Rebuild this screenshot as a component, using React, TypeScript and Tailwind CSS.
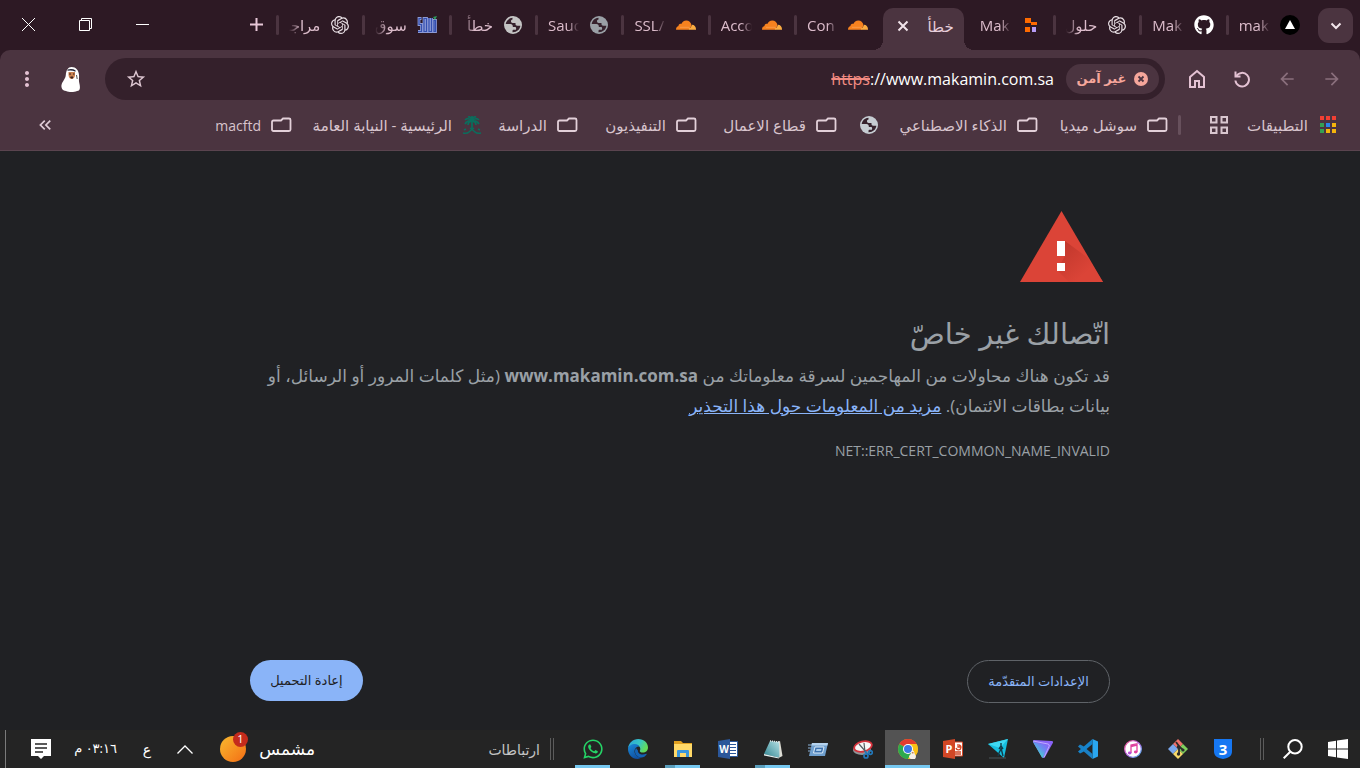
import type { ReactNode } from "react";
import { SiOpenai } from "react-icons/si";
import { FaGithub, FaWhatsapp } from "react-icons/fa";
import {
  MdArrowBack,
  MdArrowForward,
  MdKeyboardDoubleArrowLeft,
  MdMoreVert,
  MdOutlineStarBorder,
} from "react-icons/md";

/* ---------- site and toolbar icons ---------- */

function Globe({ color }: { color: string }) {
  return (
    <svg viewBox="0 0 20 20" className="size-5 shrink-0" aria-hidden="true">
      <circle cx="10" cy="10" r="9" fill={color} />
      <path
        d="M9.500 2.800C6 3 3.300 5.500 2.700 9h4.800c1.500 0 2.300 1 2.300 2.300v.7h2.400c.5 0 .9.400.9.900v1c0 .6-.3.900-.9.900h-1.500c-.8 0-1.200.5-1.200 1.200v1.200c4.200.2 7.400-2.600 7.900-6.400h-3.200c-1 0-1.700-.7-1.700-1.700V7.900H9.700c-1 0-1.700-.7-1.700-1.700 0-.9.600-1.500 1.500-1.600z"
        fill="#36222d"
      />
    </svg>
  );
}

function Cloudflare() {
  return (
    <svg viewBox="0 0 20 20" className="size-5" aria-hidden="true">
      <path d="M0 14.800C0 12.700 1 11.200 2.500 11c0-1.700 1.400-2.800 2.800-2C6 6.900 8 5.400 10.300 5.400c2.600 0 4.700 1.900 5.200 4.500l-1.800 4.900z" fill="#f6821f" />
      <path d="M16 9.800l-1.400 3-2 .8.900 1.200h6.500c.2-2.800-1.400-4.900-4-5z" fill="#fbad41" />
      <path d="M4 12.300h9.500" stroke="#f9a45a" strokeWidth="0.700" />
    </svg>
  );
}

function SouqLogo() {
  return (
    <svg viewBox="0 0 20 20" className="size-5" aria-hidden="true">
      <g fill="none" stroke="#8d9bd6" strokeWidth="2.800">
        <path d="M4.500 3.500H2v6h2.500v7H1M7 3.500v13h2.500v-13zM12 3v13.500h2.500V3M17 5.500v11h1.500v-11z" />
      </g>
      <g fill="none" stroke="#3450b0" strokeWidth="1.200">
        <path d="M4.500 3.500H2v6h2.500v7H1M7 3.500v13h2.500v-13zM12 3v13.500h2.500V3M17 5.500v11h1.500v-11z" />
      </g>
      <path d="M16 2l2 3 2-4z" fill="#2c9a5c" />
    </svg>
  );
}

function PixelBlocks() {
  return (
    <svg viewBox="0 0 20 20" className="size-5" aria-hidden="true">
      <path d="M4 3h6v5H4zM10 7h6v3h-6zM4 12h5v5H4z" fill="#ff6a00" />
      <path d="M11 12h4v5h-4z" fill="#b69cf5" />
    </svg>
  );
}

function Vercel() {
  return (
    <svg viewBox="0 0 20 20" className="size-5" aria-hidden="true">
      <circle cx="10" cy="10" r="10" fill="#000" />
      <path d="M10 5l5 9H5z" fill="#fff" />
    </svg>
  );
}

function Folder() {
  return (
    <svg viewBox="0 0 21 16" className="h-4 w-[21px] shrink-0" aria-hidden="true">
      <path
        d="M2.500 3.500h7.500l2-2h6q1.500 0 1.500 1.500v9.500q0 1.500-1.500 1.500h-15.500q-1.500 0-1.500-1.500v-7.500q0-1.500 1.500-1.500z"
        fill="none"
        stroke="#e3d0d9"
        strokeWidth="1.800"
      />
    </svg>
  );
}

function PalmEmblem() {
  return (
    <svg viewBox="0 0 20 20" className="size-5 shrink-0" fill="none" stroke="#0b6e5d" aria-hidden="true">
      <path d="M10 14V5" strokeWidth="1.800" />
      <path
        d="M10 6Q9 1 6 2M10 6q1-5 4-4M10 6Q6 2 3 5M10 6q4-4 7-1M10 6Q5 5 3 9M10 6q5-1 7 3M10 6Q6 7 6 10M10 6q4 1 4 4M10 6V1"
        strokeWidth="1.700"
      />
      <path d="M1 18q4 1 6-1t5-4M19 18q-4 1-6-1t-5-4M2 15l2-1M18 15l-2-1" strokeWidth="1.500" />
    </svg>
  );
}

function AppsGrid() {
  const cells = [
    "#f23f33", "#f23f33", "#f23f33",
    "#35a053", "#2b84ea", "#f5b50c",
    "#35a053", "#f5b50c", "#f5b50c",
  ];
  return (
    <svg viewBox="0 0 18 18" className="size-[18px] shrink-0" aria-hidden="true">
      {cells.map((c, i) => (
        <rect key={i} x={1 + (i % 3) * 6} y={(i < 3 ? 0 : 1) + Math.floor(i / 3) * 6} width="4" height="4" fill={c} />
      ))}
    </svg>
  );
}

function TabGroups() {
  return (
    <svg viewBox="0 0 18 18" className="size-[18px]" fill="none" stroke="#d9c6cf" strokeWidth="2" aria-hidden="true">
      <path d="M1 1h5.500v5.500H1zM11.500 1H17v5.500h-5.500zM1 11.500h5.500V17H1zM11.500 11.500H17V17h-5.500z" />
    </svg>
  );
}

function Home() {
  return (
    <svg viewBox="0 0 18 20" className="h-5 w-[18px]" fill="none" stroke="#e4c2d3" strokeWidth="2" aria-hidden="true">
      <path d="M2 8l7-6 7 6v10h-5v-6H7v6H2z" />
    </svg>
  );
}

function Reload() {
  return (
    <svg viewBox="0 0 18 18" className="size-[18px]" fill="none" stroke="#e4c2d3" strokeWidth="2" aria-hidden="true">
      <path d="M2.500 1.500v5h5" />
      <path d="M3.300 6.200A6.800 6.800 0 1 1 2.400 10.500" />
    </svg>
  );
}

function Avatar() {
  return (
    <svg viewBox="0 0 20 26" className="h-[26px] w-5" aria-hidden="true">
      <path d="M10.500 1c4.500 0 7 3 7.500 8 .3 3-.5 4.500.3 8 1 4 1.200 8-2.300 8-3 1.300-8 1.300-11 0-3.500 0-5-3-4.500-6C1.500 15 4.500 13 4.800 9c.4-5 2.200-8 5.700-8z" fill="#fff" />
      <path d="M7.500 6h6.500v4q-1 3-3.500 3T7.500 9z" fill="#c98150" />
      <path d="M6.500 3.500q4.500-1.500 8 .7v1.500q-4-2-8-.9z" fill="#252637" />
      <path d="M8 8h2M12 8h1.500M9.500 11h2.500l-1 1.500z" stroke="#3a211c" fill="#3a211c" />
      <path d="M15.500 9l.7 4" stroke="#555" />
    </svg>
  );
}

/* ---------- taskbar icons ---------- */

function Svg({ children }: { children: ReactNode }) {
  return (
    <svg viewBox="0 0 20 20" className="size-5" aria-hidden="true">
      {children}
    </svg>
  );
}

const EdgeIcon = () => (
  <Svg>
    <defs>
      <linearGradient id="edgeTop" x1="0" y1="0" x2="1" y2="0.400">
        <stop offset="0" stopColor="#2a9fdc" />
        <stop offset="0.600" stopColor="#37c6c4" />
        <stop offset="1" stopColor="#63dc5a" />
      </linearGradient>
      <linearGradient id="edgeBody" x1="0" y1="0" x2="0.600" y2="1">
        <stop offset="0" stopColor="#1b8ad8" />
        <stop offset="1" stopColor="#0f4fa0" />
      </linearGradient>
    </defs>
    <path d="M0 9.500C.5 4 5 0 10.200 0 16 0 20 4 20 8.500c0 3-2.300 5-5 5-2.200 0-3.600-1-3.200-1.800 1.200-1.500.5-5.700-4.300-5.700C3.500 6 .5 8 0 9.500z" fill="url(#edgeTop)" />
    <path d="M0 10c0-3 3.500-5 7-5 2 0 3.700 1 4.500 2.500C8.500 7.500 6.500 9.500 6.500 12c0 4 3.500 6.500 7 6.500-1.200.900-2.500 1.400-4 1.400C4 19.900 0 15.500 0 10z" fill="url(#edgeBody)" />
    <path d="M8 9c-3 5 1 9.500 5.500 9.500 2 0 4-1.300 5.200-3.300.2-.4-.1-.6-.5-.4-4.200 2-8.500 0-8.300-3.300z" fill="#1463b5" />
  </Svg>
);

const ExplorerIcon = () => (
  <Svg>
    <path d="M1 2h7l2 2h9v4H1z" fill="#e0a020" />
    <path d="M1 5h18v13H1z" fill="#ffd968" />
    <path d="M4 18v-6q0-1 1-1h10q1 0 1 1v6h-3v-4H7v4z" fill="#3a96dd" />
  </Svg>
);

const WordIcon = () => (
  <Svg>
    <path d="M11 2.500h8.500v15H11z" fill="#fff" stroke="#2b579a" />
    <path d="M12 5.500h6M12 8.500h6M12 11.500h6M12 14.500h6" stroke="#2b579a" />
    <path d="M0 2l12-2v20L0 18z" fill="#2b579a" />
    <text x="6" y="14" textAnchor="middle" fontSize="10" fontWeight="700" fill="#fff">W</text>
  </Svg>
);

const PowerPointIcon = () => (
  <Svg>
    <path d="M11 3h8.500v14H11z" fill="#fff" stroke="#d24726" />
    <path d="M15 5v3h3M13 9a2.500 2.500 0 1 0 3 -3M12 13h6M12 15h6" stroke="#d24726" strokeWidth="1.300" fill="none" />
    <path d="M0 2l12-2v20L0 18z" fill="#d24726" />
    <text x="6" y="14" textAnchor="middle" fontSize="11" fontWeight="700" fill="#fff">P</text>
  </Svg>
);

const NotepadIcon = () => (
  <Svg>
    <defs>
      <linearGradient id="padCover" x1="0" y1="1" x2="1" y2="0">
        <stop offset="0" stopColor="#2f8390" />
        <stop offset="1" stopColor="#b5e0e4" />
      </linearGradient>
    </defs>
    <path d="M14 3l3-1 2.500 15-4 2z" fill="#dcdcd4" />
    <path d="M7 2l9 1 .5 14.500-1.500 1L1 15z" fill="url(#padCover)" />
    <path d="M1 15l14.500 3.500.5 1L1 16.500z" fill="#e6f3f4" />
    <path d="M7 2l9 1" stroke="#e3e8e8" strokeDasharray="1 1" strokeWidth="1.500" />
  </Svg>
);

const RunIcon = () => (
  <Svg>
    <path d="M4 4h16l-3 13H1z" fill="#6f9fce" />
    <path d="M4 4h16l-.7 2.500h-16z" fill="#b5d3ee" />
    <path d="M7 8h9l-1.500 6H5.500z" fill="#3b71ae" stroke="#dcebf8" />
    <path d="M8.500 10h5l-.5 2H8z" fill="#a9cbea" />
    <path d="M0 6h4M0 9h3M0 12h2" stroke="#8db4da" />
  </Svg>
);

const SnippingIcon = () => (
  <Svg>
    <ellipse cx="9" cy="11" rx="9" ry="5" fill="#8f9699" />
    <ellipse cx="10" cy="7.500" rx="9" ry="5" transform="rotate(-14 10 7.500)" fill="#f6f6f6" stroke="#d5323c" strokeWidth="1.800" />
    <path d="M6 5l7 8M11 4l1 9" stroke="#555c60" strokeWidth="1.200" />
    <g fill="none" stroke="#2278ba" strokeWidth="1.700">
      <circle cx="13" cy="17" r="2" />
      <circle cx="17.500" cy="13.500" r="1.800" />
      <path d="M12 12l2 3 2-1" />
    </g>
  </Svg>
);

const ChromeIcon = () => (
  <Svg>
    <circle cx="10" cy="10" r="10" fill="#fbc116" />
    <path d="M10 10L1.340 5A10 10 0 0 1 18.660 5z" fill="#e33b2e" />
    <path d="M1.340 5A10 10 0 0 0 10 20l4.330-7.500L10 10z" fill="#2da94f" />
    <path d="M10 5h8.660A10 10 0 0 1 10 20l4.330-7.500z" fill="#fbc116" />
    <circle cx="10" cy="10" r="5" fill="#fff" />
    <circle cx="10" cy="10" r="4" fill="#3b78e7" />
    <path d="M14 11.500q1.500-.5 2 1l.7 2.500q1.300 1 1.300 3l-1 2h-4q-2-.5-2-2.500 0-1 1.500-2 .5-3 1.500-4z" fill="#f6efe8" />
    <path d="M13.800 13h1.700v1.500h-1.700z" fill="#c98150" />
  </Svg>
);

const RunnerIcon = () => (
  <Svg>
    <path d="M0 5L20 0l-4 19z" fill="#16bfe0" />
    <path d="M0 5L20 0l-8 9z" fill="#3fd8f2" />
    <path d="M13 4v3l-2 3M13 7l2 3M13 9l1 4 1 4M13 10l-2 4-1 3" fill="none" stroke="#123c4a" strokeWidth="1.400" />
    <path d="M1 19h17" stroke="#4b5558" />
  </Svg>
);

const ProtonIcon = () => (
  <Svg>
    <defs>
      <linearGradient id="proton" x1="0" y1="1" x2="1" y2="0">
        <stop offset="0.200" stopColor="#3fe0c5" />
        <stop offset="0.600" stopColor="#6a8cf0" />
        <stop offset="1" stopColor="#8b5cf6" />
      </linearGradient>
    </defs>
    <path d="M1 1l18 1q1.500.5.800 2L12 18q-1.500 2-3 0L0 3Q0 1 1 1z" fill="#8a63f7" />
    <path d="M0 3l14 3q1.500.5.800 2L10 18.500q-1 .5-1.500-.7z" fill="url(#proton)" />
    <path d="M0 2l15 3q2 .5 1 2.500l-5 11" fill="none" stroke="#c7c0ff" strokeWidth="0.800" />
  </Svg>
);

const VsCodeIcon = () => (
  <Svg>
    <path d="M14.500 0v20L20 17.500v-15z" fill="#2aa7f0" />
    <path d="M14.500 20L0 7.500l2-2 3 1.500 9.500 8z" fill="#1b80c4" />
    <path d="M14.500 0L0 12.500l2 2L5 13l9.500-8z" fill="#1684cc" />
  </Svg>
);

const ITunesIcon = () => (
  <Svg>
    <defs>
      <linearGradient id="itunesRing" x1="0" y1="0" x2="1" y2="1">
        <stop offset="0" stopColor="#fb5c8c" />
        <stop offset="0.500" stopColor="#b763e8" />
        <stop offset="1" stopColor="#4ac3f5" />
      </linearGradient>
    </defs>
    <circle cx="10" cy="10" r="8.300" fill="#fff" stroke="url(#itunesRing)" strokeWidth="1.300" />
    <path d="M8 14V6l6-1.300V13M8 7.500l6-1.300" fill="none" stroke="#e0409e" strokeWidth="1.300" />
    <ellipse cx="6.700" cy="14" rx="1.800" ry="1.400" fill="#b44fd8" />
    <ellipse cx="12.700" cy="13" rx="1.800" ry="1.400" fill="#e0409e" />
  </Svg>
);

const GitIcon = () => (
  <Svg>
    <path d="M10 0l5 5-5 5-5-5z" fill="#f0716b" />
    <path d="M15 5l5 5-5 5-5-5z" fill="#80cf5c" />
    <path d="M5 5l5 5-5 5-5-5z" fill="#7aa7ee" />
    <path d="M10 10l5 5-5 5-5-5z" fill="#f7d96a" />
    <path d="M8 3l3 4v8M10.500 7l4 3.500" fill="none" stroke="#2c2c2c" strokeWidth="1.800" />
    <circle cx="10.500" cy="8" r="1.800" fill="#2c2c2c" />
    <circle cx="15" cy="11" r="1.600" fill="#2c2c2c" />
    <circle cx="10.500" cy="15" r="1.700" fill="#2c2c2c" />
  </Svg>
);

const CssIcon = () => (
  <Svg>
    <path d="M1 0h18v12c0 5-3 7-9 8-6-1-9-3-9-8z" fill="#1677f2" />
    <text x="10" y="15.500" textAnchor="middle" fontSize="15" fontWeight="700" fill="#fff">3</text>
  </Svg>
);

const WindowsIcon = () => (
  <Svg>
    <path d="M0 3l8-1.200v7.700H0zM9 1.600L20 0v9.500H9zM0 10.500h8v7.700L0 17zM9 10.500h11V20L9 18.400z" fill="#fff" />
  </Svg>
);

const SearchIcon = () => (
  <Svg>
    <circle cx="12" cy="7.800" r="6.700" fill="none" stroke="#fff" strokeWidth="2" />
    <path d="M7.300 12.700L.700 19.300" stroke="#fff" strokeWidth="2" />
  </Svg>
);

/* ---------- data ---------- */

type TabItem = { title: string; icon?: ReactNode; rtl?: boolean; active?: boolean };

const chatIcon = <SiOpenai className="size-[18px] text-[#e8dfe4]" />;

const tabs: TabItem[] = [
  { title: "mak", icon: <Vercel /> },
  { title: "Mak", icon: <FaGithub className="size-5 text-white" /> },
  { title: "حلول", icon: chatIcon, rtl: true },
  { title: "Mak", icon: <PixelBlocks /> },
  { title: "خطأ", rtl: true, active: true },
  { title: "Con", icon: <Cloudflare /> },
  { title: "Acco", icon: <Cloudflare /> },
  { title: "SSL/", icon: <Cloudflare /> },
  { title: "Saud", icon: <Globe color="#9aa0a6" /> },
  { title: "خطأ", icon: <Globe color="#c4c4c4" />, rtl: true },
  { title: "سوق", icon: <SouqLogo />, rtl: true },
  { title: "مراجـ", icon: chatIcon, rtl: true },
];

const bookmarks: { label: string; icon: ReactNode; width: string }[] = [
  { label: "سوشل ميديا", icon: <Folder />, width: "w-[130px]" },
  { label: "الذكاء الاصطناعي", icon: <Folder />, width: "w-[159px]" },
  { label: "", icon: <Globe color="#c6ccd2" />, width: "w-[42px]" },
  { label: "قطاع الاعمال", icon: <Folder />, width: "w-[140px]" },
  { label: "التنفيذيون", icon: <Folder />, width: "w-[119px]" },
  { label: "الدراسة", icon: <Folder />, width: "w-[96px]" },
  { label: "الرئيسية - النيابة العامة", icon: <PalmEmblem />, width: "w-[190px]" },
  { label: "macftd", icon: <Folder />, width: "w-[90px] text-[14px]" },
];

const pinned: { name: string; icon: ReactNode; state?: "open" | "stacked" | "focused" }[] = [
  { name: "CSS", icon: <CssIcon /> },
  { name: "Git", icon: <GitIcon /> },
  { name: "iTunes", icon: <ITunesIcon /> },
  { name: "VS Code", icon: <VsCodeIcon /> },
  { name: "Proton VPN", icon: <ProtonIcon /> },
  { name: "Runner", icon: <RunnerIcon /> },
  { name: "PowerPoint", icon: <PowerPointIcon /> },
  { name: "Chrome", icon: <ChromeIcon />, state: "focused" },
  { name: "Snipping Tool", icon: <SnippingIcon /> },
  { name: "Run", icon: <RunIcon /> },
  { name: "Notepad", icon: <NotepadIcon />, state: "stacked" },
  { name: "Word", icon: <WordIcon /> },
  { name: "Explorer", icon: <ExplorerIcon />, state: "stacked" },
  { name: "Edge", icon: <EdgeIcon /> },
  { name: "WhatsApp", icon: <FaWhatsapp className="size-[22px] text-[#25d366]" />, state: "open" },
];

/* ---------- sections ---------- */

function Tab({ tab, separated }: { tab: TabItem; separated: boolean }) {
  if (tab.active) {
    return (
      <div className="flex min-w-0 flex-1">
        <div className="relative mx-[3px] mt-2 flex min-w-0 flex-1 items-center justify-between rounded-t-[10px] bg-[#4b3440] px-2.5 before:absolute before:bottom-0 before:-left-2.5 before:size-2.5 before:bg-[radial-gradient(circle_at_0_0,transparent_10px,#4b3440_10px)] after:absolute after:-right-2.5 after:bottom-0 after:size-2.5 after:bg-[radial-gradient(circle_at_100%_0,transparent_10px,#4b3440_10px)]">
          <button role="tab" aria-selected="true" className="mb-1.5 text-[15px] text-[#e8cfdb]">
            {tab.title}
          </button>
          <button aria-label="إغلاق علامة التبويب" className="mb-1.5 p-1">
            <svg viewBox="0 0 12 12" className="size-3" stroke="#f0e3ea" strokeWidth="2" aria-hidden="true">
              <path d="M1.500 1.500l9 9M10.500 1.500l-9 9" />
            </svg>
          </button>
        </div>
      </div>
    );
  }
  return (
    <button role="tab" aria-selected="false" className="flex min-w-0 flex-1 items-center">
      <span className="mr-3 flex w-5 shrink-0 justify-center">{tab.icon}</span>
      {tab.rtl ? (
        <span className="mr-2.5 min-w-0 flex-1 overflow-hidden text-right text-[15px] whitespace-nowrap text-[#dcbccb] [mask-image:linear-gradient(to_left,#000_60%,transparent)]">
          {tab.title}
        </span>
      ) : (
        <span
          dir="ltr"
          className="mr-2.5 min-w-0 flex-1 overflow-hidden text-left text-[15px] whitespace-nowrap text-[#dcbccb] [mask-image:linear-gradient(to_right,#000_65%,transparent)]"
        >
          {tab.title}
        </span>
      )}
      <span className={separated ? "mr-2.5 h-5 w-[3px] rounded-full bg-[#4b3440]" : "mr-2.5 w-[3px]"} />
    </button>
  );
}

function TitleBar() {
  return (
    <div className="flex h-[50px]">
      <div className="flex w-12 shrink-0 items-start pt-2 pr-[7px]">
        <button aria-label="البحث في علامات التبويب" className="flex size-[35px] items-center justify-center rounded-[11px] bg-[#4b3440]">
          <svg viewBox="0 0 12 8" className="h-2 w-3" fill="none" stroke="#f3e6ec" strokeWidth="2" aria-hidden="true">
            <path d="M1.500 1.500L6 6l4.500-4.500" />
          </svg>
        </button>
      </div>
      <div role="tablist" className="flex min-w-0 flex-1">
        {tabs.map((tab, i) => (
          <Tab key={i} tab={tab} separated={!tab.active && !tabs[i + 1]?.active} />
        ))}
      </div>
      <div className="flex w-[276px] shrink-0 items-center pb-0.5 text-white">
        <button aria-label="علامة تبويب جديدة" className="mr-[13px]">
          <svg viewBox="0 0 13 13" className="size-[13px]" stroke="#e8c8d8" strokeWidth="2" aria-hidden="true">
            <path d="M6.500 0v13M0 6.500h13" />
          </svg>
        </button>
        <div className="mr-auto flex items-center gap-11 pl-[22px]">
          <button aria-label="تصغير">
            <svg viewBox="0 0 13 13" className="size-[13px]" stroke="currentColor" aria-hidden="true">
              <path d="M0 6.500h13" />
            </svg>
          </button>
          <button aria-label="استعادة">
            <svg viewBox="0 0 13 13" className="size-[13px]" fill="none" stroke="currentColor" aria-hidden="true">
              <path d="M.5 2.500h10v10H.5zM2.500 2.500v-2h10v10h-2" />
            </svg>
          </button>
          <button aria-label="إغلاق">
            <svg viewBox="0 0 13 13" className="size-[13px]" stroke="currentColor" aria-hidden="true">
              <path d="M0 0l13 13M13 0L0 13" />
            </svg>
          </button>
        </div>
      </div>
    </div>
  );
}

function Toolbar() {
  return (
    <div className="flex h-[58px] items-center">
      <div className="flex w-[195px] shrink-0 items-center pr-[18px] text-[#8a6f7c]">
        <button aria-label="رجوع" className="w-5"><MdArrowForward className="size-5" /></button>
        <button aria-label="للأمام" className="mr-[25px] w-5"><MdArrowBack className="size-5" /></button>
        <button aria-label="إعادة تحميل" className="mr-[26px]"><Reload /></button>
        <button aria-label="الصفحة الرئيسية" className="mr-[27px]"><Home /></button>
      </div>
      <div className="flex h-[42px] min-w-0 flex-1 items-center rounded-full bg-[#34202b] pr-1.5 pl-5">
        <button className="flex h-[30px] w-[93px] items-center justify-center gap-2 rounded-full bg-[#4b3440] text-[13px] font-bold whitespace-nowrap text-[#f5a69b]">
          <svg viewBox="0 0 14 14" className="size-3.5" aria-hidden="true">
            <circle cx="7" cy="7" r="7" fill="#f5a69b" />
            <path d="M4.500 4.500l5 5M9.500 4.500l-5 5" stroke="#4b3440" strokeWidth="1.800" />
          </svg>
          غير آمن
        </button>
        <label dir="ltr" className="mr-3 flex items-center text-[16px] text-white">
          <span className="text-[#f28b82] line-through decoration-2">https</span>
          <input
            aria-label="شريط العناوين"
            defaultValue="://www.makamin.com.sa"
            className="field-sizing-content bg-transparent outline-none"
          />
        </label>
        <button aria-label="إضافة إشارة مرجعية" className="mr-auto">
          <MdOutlineStarBorder className="size-[22px] text-[#ddc6d1]" />
        </button>
      </div>
      <div className="flex w-[105px] shrink-0 items-center justify-end gap-[22px] pl-[15px]">
        <button aria-label="الملف الشخصي"><Avatar /></button>
        <button aria-label="القائمة"><MdMoreVert className="size-6 text-[#e4c2d3]" /></button>
      </div>
    </div>
  );
}

function Bookmarks() {
  return (
    <nav className="flex h-[34px] items-center pr-[23px] text-[15px] whitespace-nowrap text-[#d8c4cd]">
      <a href="#apps" className="flex w-[109px] items-center gap-[11px]">
        <AppsGrid />
        التطبيقات
      </a>
      <button aria-label="مجموعات علامات التبويب"><TabGroups /></button>
      <span className="mr-[29px] h-5 w-[3px] rounded-full bg-[#67505c]" />
      <div className="mr-2.5 flex min-w-0 flex-1 overflow-hidden">
        {bookmarks.map((b) => (
          <a key={b.label} href="#bookmark" aria-label={b.label || "موقع"} className={`flex h-[30px] shrink-0 items-center gap-2.5 ${b.width}`}>
            {b.icon}
            {b.label}
          </a>
        ))}
      </div>
      <button aria-label="المزيد من الإشارات" className="ml-[35px]">
        <MdKeyboardDoubleArrowLeft className="size-5 text-[#e0ccd6]" />
      </button>
    </nav>
  );
}

function Warning() {
  return (
    <main className="flex flex-1 flex-col bg-[#202124] px-6 pt-[60px] pb-[27px] text-[#9aa0a6]">
      <div className="mx-auto flex w-full max-w-[860px] flex-1 flex-col">
        <svg viewBox="0 0 83 71" className="mr-[7px] h-[71px] w-[83px]" aria-hidden="true">
          <defs>
            <linearGradient id="warnShade" x1="0" y1="0" x2="1" y2="1">
              <stop offset="0" stopColor="#b02f25" />
              <stop offset="0.700" stopColor="#db4437" />
            </linearGradient>
          </defs>
          <path d="M41.500 0L83 71H0z" fill="#db4437" />
          <path d="M45 30l23 17 15 24H49l-12-12 8-14z" fill="url(#warnShade)" opacity="0.700" />
          <path d="M37 30h8v15h-8zM37 52h8v8h-8z" fill="#fff" />
        </svg>
        <h1 className="mt-[33px] text-[29px] leading-9">اتّصالك غير خاصّ</h1>
        <p className="mt-2.5 text-[17px] leading-[30px]">
          قد تكون هناك محاولات من المهاجمين لسرقة معلوماتك من <strong>www.makamin.com.sa</strong> (مثل كلمات المرور أو الرسائل، أو بيانات بطاقات الائتمان).{" "}
          <a href="#learn-more" className="text-[#8ab4f8] underline">مزيد من المعلومات حول هذا التحذير</a>
        </p>
        <p className="mt-[18px] text-[14px] leading-6">NET::ERR_CERT_COMMON_NAME_INVALID</p>
        <div className="mt-auto flex items-start justify-between text-[13px]">
          <button className="h-[43px] w-[143px] rounded-full border border-[#5f6368] text-[#8ab4f8]">الإعدادات المتقدّمة</button>
          <button className="h-[41px] w-[113px] rounded-full bg-[#8ab4f8] text-[#202124]">إعادة التحميل</button>
        </div>
      </div>
    </main>
  );
}

function Grip() {
  return <span className="h-[22px] w-1 shrink-0 border-x border-[#5c5c5c]" />;
}

function Taskbar() {
  return (
    <footer className="flex h-[38px] items-center bg-[#242424] text-white">
      <button aria-label="ابدأ" className="flex w-11 justify-center"><WindowsIcon /></button>
      <button aria-label="بحث" className="flex w-[47px] justify-center"><SearchIcon /></button>
      <span className="ml-2.5 flex w-3.5 shrink-0 justify-center"><Grip /></span>
      <div className="flex h-full">
        {pinned.map((app) => (
          <button
            key={app.name}
            aria-label={app.name}
            className={`relative flex h-full w-[45px] items-center justify-center ${app.state === "focused" ? "bg-[#535353]" : ""}`}
          >
            {app.icon}
            {app.state === "focused" && <span className="absolute inset-x-0 bottom-0 h-[3px] bg-[#76c8f0]" />}
            {app.state === "open" && <span className="absolute inset-x-[5px] bottom-0 h-[3px] bg-[#76c8f0]" />}
            {app.state === "stacked" && (
              <span className="absolute inset-x-[5px] bottom-0 h-[3px] border-l-[10px] border-[#5a9dbb] bg-[#76c8f0]" />
            )}
          </button>
        ))}
      </div>
      <span className="mr-4 flex"><Grip /></span>
      <span className="mr-2.5 text-[14px] text-[#c4c4c4]">ارتباطات</span>
      <div className="mr-auto flex items-center">
        <button className="flex w-[95px] items-center justify-between text-[17px]">
          مشمس
          <span className="relative size-[26px] rounded-full bg-linear-to-br from-[#f7b92f] to-[#f36c14]">
            <span className="absolute -top-1 -right-0.5 flex size-[15px] items-center justify-center rounded-full bg-[#c42b1c] text-[11px]">1</span>
          </span>
        </button>
        <button aria-label="إظهار الرموز المخفية" className="mr-[27px]">
          <svg viewBox="0 0 16 9" className="h-[9px] w-4" fill="none" stroke="#fff" strokeWidth="1.300" aria-hidden="true">
            <path d="M.5 8.500L8 1l7.500 7.500" />
          </svg>
        </button>
        <span className="flex w-[60px] justify-center text-[14px]">ع</span>
        <time className="w-[44px] text-[13px] whitespace-nowrap">٠٣:١٦ م</time>
        <button aria-label="الإشعارات" className="mr-[22px]">
          <svg viewBox="0 0 20 20" className="size-5" aria-hidden="true">
            <path d="M0 0h20v17h-7l-3 3-3-3H0z" fill="#fff" />
            <path d="M4 5h12M4 9h12M4 13h8" stroke="#242424" strokeWidth="1.300" />
          </svg>
        </button>
        <span className="mr-[25px] ml-[5px] h-[38px] w-px bg-[#7a7a7a]" />
      </div>
    </footer>
  );
}

export default function App() {
  return (
    <div dir="rtl" className="flex min-h-screen flex-col bg-[#2d1924] font-['Open_Sans','DejaVu_Sans',sans-serif]">
      <header>
        <TitleBar />
        <div className="rounded-t-[10px] border-b border-[#5a444f] bg-[#4b3440] pb-2">
          <Toolbar />
          <Bookmarks />
        </div>
      </header>
      <Warning />
      <Taskbar />
    </div>
  );
}
